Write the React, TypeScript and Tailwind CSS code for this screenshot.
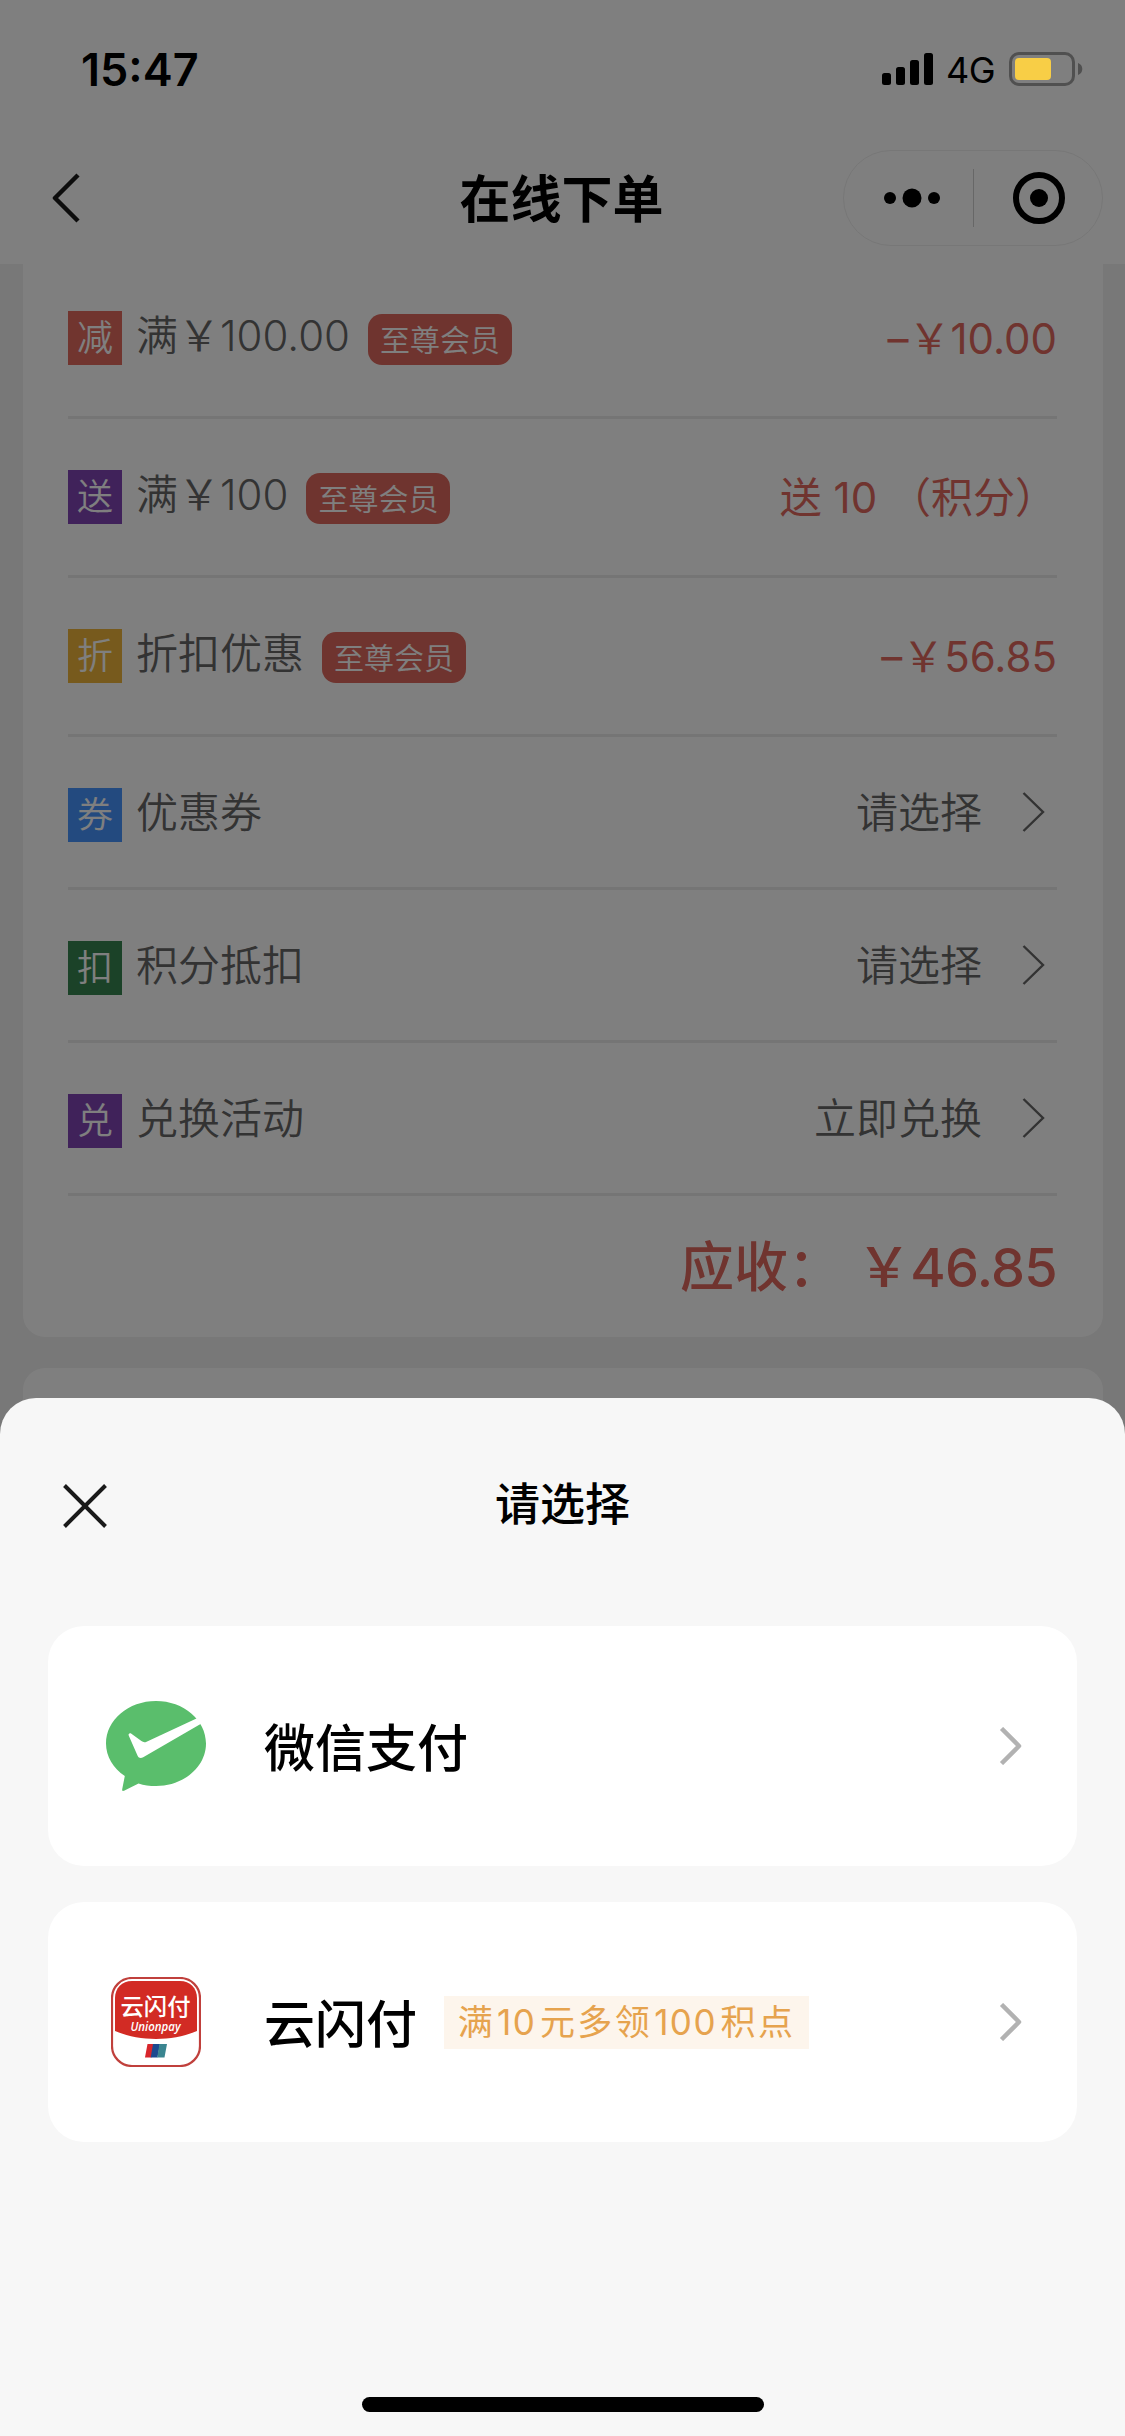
import type { ReactNode } from 'react'

interface Discount {
  tag: string
  tagClass: string
  label: string
  member?: boolean
  value: string
  valueClass?: string
}

const discounts: Discount[] = [
  { tag: '减', tagClass: 'bg-[#e26a5f]', label: '满￥100.00', member: true, value: '–￥10.00' },
  {
    tag: '送',
    tagClass: 'bg-[#8044b4]',
    label: '满￥100',
    member: true,
    value: '送 10 （积分）',
    valueClass: 'whitespace-pre',
  },
  { tag: '折', tagClass: 'bg-[#eeb53a]', label: '折扣优惠', member: true, value: '–￥56.85' },
]

const options: Discount[] = [
  { tag: '券', tagClass: 'bg-[#4694ff]', label: '优惠券', value: '请选择' },
  { tag: '扣', tagClass: 'bg-[#368450]', label: '积分抵扣', value: '请选择' },
  { tag: '兑', tagClass: 'bg-[#8044b4]', label: '兑换活动', value: '立即兑换' },
]

export default function App() {
  return (
    <div className="relative h-[2436px] w-[1125px] overflow-hidden bg-[#f0f0f0] font-['Inter','Noto_Sans_CJK_SC',sans-serif] text-black">
      <NavBar />

      <main className="-mt-1 flex flex-col gap-[31px] pr-[22px] pl-[23px]">
        <section className="rounded-b-[22px] bg-white pr-[46px] pl-[45px]">
          {discounts.map((item) => (
            <DiscountRow key={item.tag} item={item} />
          ))}
          {options.map((item) => (
            <OptionRow key={item.tag} item={item} />
          ))}
          <div className="flex h-[141px] items-center justify-end pt-[2px] text-[54px] leading-none font-medium text-[#e0685e]">
            <span>应收：</span>
            <span className="ml-[15px] tracking-[-0.7px]">￥46.85</span>
          </div>
        </section>
        <section className="h-[200px] rounded-[22px] bg-white" />
      </main>

      {/* Backdrop */}
      <div className="absolute inset-0 bg-black/50" />

      <StatusBar />
      <PaymentSheet />
    </div>
  )
}

function StatusBar() {
  return (
    <div className="absolute inset-x-0 top-0 flex h-[138px] items-center justify-between pr-[42px] pl-[81px]">
      <span className="text-[45px] leading-none font-semibold">15:47</span>
      <div className="flex items-center">
        <svg className="h-8 w-[51px]" viewBox="0 0 51 32">
          <rect x="0" y="20" width="9" height="12" rx="2.5" />
          <rect x="14" y="14" width="9" height="18" rx="2.5" />
          <rect x="28" y="7" width="9" height="25" rx="2.5" />
          <rect x="42" y="0" width="9" height="32" rx="2.5" />
        </svg>
        <span className="ml-[13px] pt-[2px] text-[36px] leading-none tracking-[-0.5px]">4G</span>
        <svg className="ml-[14px] h-[34px] w-[74px]" viewBox="0 0 74 34">
          <rect x="1.5" y="1.5" width="63" height="31" rx="8.5" fill="none" stroke="#505050" strokeWidth="3" />
          <rect x="6" y="6" width="36" height="22" rx="4" fill="#f8ce46" />
          <path d="M69 11c2.7 1 4.3 3.3 4.3 6s-1.6 5-4.3 6z" fill="#505050" />
        </svg>
      </div>
    </div>
  )
}

function NavBar() {
  return (
    <header className="relative z-0 h-[264px] bg-white pt-[132px]">
      <div className="grid h-[132px] grid-cols-3 items-center pr-[22px] pl-[52px]">
        <svg className="h-[50px] w-[28px]" viewBox="0 0 28 50" fill="none" stroke="#1a1a1a" strokeWidth="4.5">
          <path d="M26 2 3 25l23 23" strokeLinejoin="round" />
        </svg>
        <h1 className="-ml-[32px] pt-[3px] text-center text-[51px] leading-none font-semibold">在线下单</h1>
        <div className="flex h-[96px] w-[260px] items-center justify-self-end rounded-full border border-[#eeeeee]">
          <svg className="h-[58px] w-[258px]" viewBox="0 0 258 58">
            <circle cx="46" cy="29" r="6" />
            <circle cx="68" cy="29" r="9.5" />
            <circle cx="90" cy="29" r="6" />
            <path d="M129.5 0v58" stroke="#cfcfcf" />
            <circle cx="195" cy="29" r="23" fill="none" stroke="#000" strokeWidth="6" />
            <circle cx="195" cy="29" r="9" />
          </svg>
        </div>
      </div>
    </header>
  )
}

function RowLabel({ item }: { item: Discount }) {
  return (
    <div className="flex items-end">
      <span
        className={`flex h-[54px] w-[54px] items-center justify-center text-[36px] leading-none font-[350] text-white ${item.tagClass}`}
      >
        {item.tag}
      </span>
      <span className="ml-[14px] flex h-[58px] items-center text-[42px] leading-none font-[360]">{item.label}</span>
      {item.member && (
        <span className="ml-[18px] flex h-[51px] w-[144px] items-center justify-center rounded-[14px] bg-[#de695e] text-[30px] leading-none font-[350] text-white">
          至尊会员
        </span>
      )}
    </div>
  )
}

function DiscountRow({ item }: { item: Discount }) {
  return (
    <div className="flex h-[159px] items-center justify-between border-b-[3px] border-[#ebebeb] text-[#666]">
      <div className="-mt-[4px]">
        <RowLabel item={item} />
      </div>
      <span className={`pt-[2px] text-[42px] leading-none text-[#e0685e] ${item.valueClass ?? ''}`}>
        {item.value}
      </span>
    </div>
  )
}

function OptionRow({ item }: { item: Discount }) {
  return (
    <div className="flex h-[153px] items-center justify-between border-b-[3px] border-[#ebebeb] text-[#666]">
      <div className="pt-[2px]">
        <RowLabel item={item} />
      </div>
      <div className="flex items-center pr-3">
        <span className="pt-[2px] text-[42px] leading-none font-[350]">{item.value}</span>
        <svg
          className="ml-[40px] h-[40px] w-[23px]"
          viewBox="0 0 23 40"
          fill="none"
          stroke="currentColor"
          strokeWidth="2.4"
        >
          <path d="M1.5 1 21 20 1.5 39" />
        </svg>
      </div>
    </div>
  )
}

function PaymentSheet() {
  return (
    <div className="absolute inset-x-0 bottom-0 flex h-[1038px] flex-col rounded-t-[36px] bg-[#f7f7f7] px-[48px]">
      <div className="grid h-[216px] grid-cols-3 items-center">
        <svg
          className="ml-[15px] h-[44px] w-[44px]"
          viewBox="0 0 44 44"
          fill="none"
          stroke="#1a1a1a"
          strokeWidth="4"
        >
          <path d="M1.5 1.5 42.5 42.5M42.5 1.5 1.5 42.5" />
        </svg>
        <h2 className="pb-[3px] text-center text-[45px] leading-none font-medium">请选择</h2>
      </div>

      <div className="mt-3 flex flex-col gap-9">
        <PaymentCard icon={<WechatPayIcon />} name="微信支付" />
        <PaymentCard icon={<UnionPayIcon />} name="云闪付" promo="满10元多领100积点" />
      </div>

      <div className="mt-auto mb-6 h-[15px] w-[402px] self-center rounded-full bg-black" />
    </div>
  )
}

function PaymentCard({ icon, name, promo }: { icon: ReactNode; name: string; promo?: string }) {
  return (
    <button className="flex h-[240px] items-center rounded-[36px] bg-white pr-[54px] pl-[58px]">
      {icon}
      <span className="ml-[58px] pt-[5px] text-[51px] leading-none font-medium">{name}</span>
      {promo && <Promo text={promo} />}
      <svg
        className="ml-auto h-[38px] w-[24px]"
        viewBox="0 0 24 38"
        fill="none"
        stroke="#b2b2b2"
        strokeWidth="4.5"
      >
        <path d="M2.5 1.5 20 19 2.5 36.5" strokeLinejoin="round" />
      </svg>
    </button>
  )
}

// Numbers get a little air on both sides
function Promo({ text }: { text: string }) {
  return (
    <span className="ml-[27px] flex h-[53px] w-[365px] items-center justify-center bg-[#fdf5ec] text-[35px] leading-none tracking-[2.4px] text-[#e6a34e]">
      {text.split(/(\d+)/).map((part, i) => (
        <span key={i} className={/\d/.test(part) ? 'mr-[3.5px] ml-[2px] tracking-[1.5px]' : ''}>
          {part}
        </span>
      ))}
    </span>
  )
}

function WechatPayIcon() {
  return (
    <svg className="h-[90px] w-[100px]" viewBox="0 0 100 90">
      <path
        d="M50 0c27.6 0 50 19 50 42.5S77.6 85 50 85c-6.4 0-12-.8-17.5-2.6L18 89.8c-1.3.5-2-.2-1.8-1.5L18.8 75C7.3 67.3 0 55.7 0 42.5 0 19 22.4 0 50 0z"
        fill="#5abe6c"
      />
      <path
        d="M22.700 34.5c-.7-1.9 1.2-3 2.7-1.8l10 7.4c1.7 1.2 3.2 1.5 5.2.6L91 17.300l4 5.400-57.800 33.500c-2.4 1.3-4.6.8-5.6-1.5z"
        fill="#fff"
      />
    </svg>
  )
}

function UnionPayIcon() {
  return (
    <svg className="mr-[5px] ml-[5px] h-[90px] w-[90px]" viewBox="0 0 90 90">
      <rect x="1" y="1" width="88" height="88" rx="20" fill="#fff" stroke="#c0403c" strokeWidth="2.2" />
      <path d="M4 54V21C4 11 11 4 21 4h48c10 0 17 7 17 17v33c-24 10.5-58 10.5-82 0z" fill="#d22b24" />
      <text
        x="9.5"
        y="37.5"
        fontSize="23"
        fontWeight="500"
        fill="#fff"
        textLength="70"
        lengthAdjust="spacingAndGlyphs"
      >
        云闪付
      </text>
      <text
        x="19.5"
        y="54"
        fontSize="13"
        fontWeight="600"
        fontStyle="italic"
        fontFamily="Open Sans, sans-serif"
        fill="#fff"
        textLength="50"
        lengthAdjust="spacingAndGlyphs"
      >
        Unionpay
      </text>
      <path d="M36.5 67H43l-2.5 13.5H34z" fill="#d8262c" />
      <path d="M42 67h7l-2.5 13.5h-6.8z" fill="#1d4a8f" />
      <path d="M48.5 67H56l-2.5 13.5h-7.3z" fill="#3a8590" />
    </svg>
  )
}
